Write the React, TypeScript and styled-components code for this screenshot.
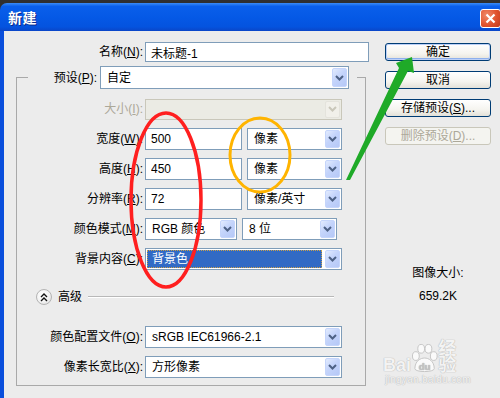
import React from 'react';
import styled, { createGlobalStyle } from 'styled-components';

const GlobalStyle = createGlobalStyle`
  html, body {
    margin: 0;
    padding: 0;
    background: #2f2f2f;
    overflow: hidden;
  }
  body {
    font-family: "Liberation Sans", "Noto Sans CJK SC", sans-serif;
    font-size: 12px;
  }
`;

const Page = styled.div`
  position: relative;
  width: 500px;
  height: 398px;
  overflow: hidden;
  padding-top: 3px;
  box-sizing: border-box;
`;

const Window = styled.div`
  width: 506px;
  display: flex;
  flex-direction: column;
`;

const TitleBar = styled.div`
  height: 28px;
  display: flex;
  align-items: center;
  justify-content: space-between;
  padding: 0 5px 0 8px;
  border-radius: 7px 7px 0 0;
  background: linear-gradient(#3b8cf5 0%, #0a5fea 12%, #0559e6 50%, #0453df 85%, #0a46c8 100%);
`;

const Title = styled.span`
  color: #fff;
  font-weight: bold;
  font-size: 14px;
  line-height: 14px;
  letter-spacing: 0.5px;
  text-shadow: 1px 1px 0 #0b2a8a;
  font-family: "Noto Sans CJK SC", sans-serif;
`;

const CloseButton = styled.div`
  width: 19px;
  height: 17px;
  margin-top: 2px;
  border: 1px solid #fff;
  border-radius: 3px;
  background: radial-gradient(circle at 30% 30%, #f08a6a 0%, #e0522e 55%, #c23a1a 100%);
  display: flex;
  align-items: center;
  justify-content: center;
`;

const Body = styled.div`
  height: 370px;
  display: flex;
  border-left: 4px solid #0a4fdc;
  background: #ececec;
  padding-top: 10px;
  box-sizing: border-box;
`;

const LeftColumn = styled.div`
  width: 366px;
  display: flex;
  flex-direction: column;
`;

const RightColumn = styled.div`
  width: 106px;
  margin-left: 15px;
  padding-top: 2px;
  display: flex;
  flex-direction: column;
  gap: 10px;
`;

const Row = styled.div<{ $labelWidth: number }>`
  display: flex;
  align-items: center;
  height: 22px;

  > label {
    width: ${(p) => p.$labelWidth}px;
    margin-right: 2px;
    flex-shrink: 0;
  }
`;

const Label = styled.label<{ $disabled?: boolean }>`
  text-align: right;
  color: ${(p) => (p.$disabled ? '#aca899' : '#000')};
  font-size: 12px;
  line-height: 14px;
  white-space: nowrap;
`;

const Key = styled.span`
  text-decoration: underline;
  text-underline-offset: 1px;
`;

const TextField = styled.input`
  box-sizing: border-box;
  width: ${(p) => p.width}px;
  height: 22px;
  border: 1px solid #7f9db9;
  background: #fff;
  padding: 0 5px;
  margin: 0;
  font-family: "Liberation Sans", "Noto Sans CJK SC", sans-serif;
  font-size: 12px;
  color: #000;
  outline: none;
`;

const SelectBox = styled.div<{ $width: number; $height?: number; $disabled?: boolean }>`
  box-sizing: border-box;
  width: ${(p) => p.$width}px;
  height: ${(p) => p.$height ?? 22}px;
  display: flex;
  align-items: stretch;
  border: 1px solid ${(p) => (p.$disabled ? '#c9c7ba' : '#7f9db9')};
  background: ${(p) => (p.$disabled ? '#ebebe4' : '#fff')};
  padding: 1px;
`;

const SelectText = styled.div<{ $selected?: boolean }>`
  flex: 1;
  display: flex;
  align-items: center;
  padding-left: ${(p) => (p.$selected ? 4 : 5)}px;
  margin-right: ${(p) => (p.$selected ? 3 : 0)}px;
  color: ${(p) => (p.$selected ? '#fff' : '#000')};
  background: ${(p) => (p.$selected ? '#316ac5' : 'transparent')};
  border: ${(p) => (p.$selected ? '1px dotted #caa04a' : 'none')};
  white-space: nowrap;
  overflow: hidden;
  line-height: 14px;
`;

const ArrowButton = styled.div<{ $disabled?: boolean }>`
  width: 15px;
  box-sizing: border-box;
  border: 1px solid ${(p) => (p.$disabled ? '#e4e3dc' : '#c5d5fb')};
  border-radius: 2px;
  background: ${(p) =>
    p.$disabled
      ? '#f1f0ea'
      : 'linear-gradient(135deg, #e2ebfe 0%, #c4d4fb 45%, #b5c8f7 100%)'};
  display: flex;
  align-items: center;
  justify-content: center;
`;

const Chevron = ({ color }: { color: string }) => (
  <svg width="9" height="6" viewBox="0 0 9 6">
    <path d="M1 1 L4.5 4.5 L8 1" fill="none" stroke={color} strokeWidth="2" />
  </svg>
);

interface SelectProps {
  width: number;
  height?: number;
  value?: string;
  disabled?: boolean;
  selected?: boolean;
}

const Select = ({ width, height, value, disabled, selected }: SelectProps) => (
  <SelectBox $width={width} $height={height} $disabled={disabled}>
    <SelectText $selected={selected}>{value}</SelectText>
    <ArrowButton $disabled={disabled}>
      <Chevron color={disabled ? '#c9c7ba' : '#4d6185'} />
    </ArrowButton>
  </SelectBox>
);

const GroupBox = styled.fieldset`
  width: 350px;
  box-sizing: border-box;
  margin: 3px 0 0 12px;
  padding: 0 0 7px 0;
  min-inline-size: 0;
  border: 1px solid #a9a9a9;
`;

const Legend = styled.legend`
  margin-left: 11px;
  padding: 0 8px 0 0;
`;

const LegendRow = styled.div`
  display: flex;
  align-items: center;
  height: 23px;

  > label {
    width: 69px;
    margin-right: 3px;
  }
`;

const Fields = styled.div<{ $top?: number }>`
  display: flex;
  flex-direction: column;
  gap: 8px;
  padding-top: ${(p) => p.$top ?? 0}px;
`;

const Pair = styled.div`
  display: flex;
  gap: 5px;
  align-items: center;
`;

const AdvancedRow = styled.div`
  display: flex;
  align-items: center;
  height: 16px;
  margin: 19px 31px 21px 19px;
  gap: 6px;
`;

const RoundButton = styled.div`
  width: 16px;
  height: 16px;
  box-sizing: border-box;
  border-radius: 50%;
  border: 1px solid #b4b4b4;
  background: radial-gradient(circle at 40% 35%, #ffffff 0%, #f2f2f2 55%, #d6d6d6 100%);
  display: flex;
  align-items: center;
  justify-content: center;
`;

const AdvancedText = styled.span`
  line-height: 14px;
`;

const Rule = styled.div`
  flex: 1;
  height: 1px;
  background: #b8b8b8;
  border-bottom: 1px solid #fff;
`;

const XPButton = styled.button<{ $default?: boolean }>`
  width: 106px;
  height: 18px;
  padding: 0;
  margin: 0;
  box-sizing: border-box;
  border: 1px solid ${(p) => (p.disabled ? '#c9c7ba' : '#003c74')};
  border-radius: 3px;
  background: ${(p) =>
    p.disabled ? '#f4f4f0' : 'linear-gradient(#ffffff 0%, #f5f4ef 60%, #e3e1d8 100%)'};
  box-shadow: ${(p) => (p.$default ? 'inset 0 0 0 1px #bcd0f7, inset 0 -1px 0 1px #8eb0ed' : 'none')};
  color: ${(p) => (p.disabled ? '#aca899' : '#000')};
  font-family: "Liberation Sans", "Noto Sans CJK SC", sans-serif;
  font-size: 12px;
  line-height: 14px;
`;

const Info = styled.div`
  margin-top: 111px;
  display: flex;
  flex-direction: column;
  align-items: center;
  gap: 9px;
  line-height: 14px;
`;

const Annotations = styled.svg`
  position: absolute;
  left: 0;
  top: 0;
  pointer-events: none;
`;

const Watermark = styled.div`
  position: absolute;
  left: 383px;
  top: 343px;
  width: 90px;
  display: flex;
  flex-direction: column;
  align-items: center;
  color: rgba(255, 255, 255, 0.85);
  text-shadow: 0 0 1px #b5b5b5, 0 0 1px #b5b5b5;
  pointer-events: none;
`;

const MarkLine = styled.div`
  display: flex;
  align-items: flex-end;
  height: 30px;
`;

const MarkWord = styled.span`
  font-family: "Liberation Sans", "Noto Sans CJK SC", sans-serif;
  font-weight: bold;
  font-size: 18px;
  line-height: 16px;
`;

const MarkUrl = styled.span`
  font-family: "Liberation Sans", sans-serif;
  font-size: 10px;
  line-height: 10px;
  margin-top: 2px;
  letter-spacing: 0.3px;
`;

const Paw = () => (
  <svg width="28" height="30" viewBox="0 0 28 30">
    <g fill="#fafafa" stroke="#c4c4c4" strokeWidth="1">
      <ellipse cx="5" cy="13" rx="3.5" ry="4.5" />
      <ellipse cx="10.5" cy="5.5" rx="3.5" ry="4.5" />
      <ellipse cx="18" cy="5.5" rx="3.5" ry="4.5" />
      <ellipse cx="23.5" cy="13" rx="3.5" ry="4.5" />
      <path d="M4 26 C4 18 10 15 14 15 C18 15 24 18 24 26 C24 30 4 30 4 26 Z" />
    </g>
    <text x="14" y="27" textAnchor="middle" fontSize="10" fontWeight="bold" fill="#c4c4c4" fontFamily="Liberation Sans, sans-serif">
      du
    </text>
  </svg>
);

export default function App() {
  return (
    <>
      <GlobalStyle />
      <Page>
        <Window>
          <TitleBar>
            <Title>新建</Title>
            <CloseButton>
              <svg width="11" height="11" viewBox="0 0 11 11">
                <path d="M1.5 1.5 L9.5 9.5 M9.5 1.5 L1.5 9.5" stroke="#fff" strokeWidth="2.2" />
              </svg>
            </CloseButton>
          </TitleBar>
          <Body>
            <LeftColumn>
              <Row $labelWidth={139}>
                <Label>名称(<Key>N</Key>):</Label>
                <TextField width={224} style={{ height: 20 }} defaultValue="未标题-1" readOnly />
              </Row>
              <GroupBox>
                <Legend>
                  <LegendRow>
                    <Label>预设(<Key>P</Key>):</Label>
                    <Select width={249} height={23} value="自定" />
                  </LegendRow>
                </Legend>
                <Fields $top={9}>
                  <Row $labelWidth={126}>
                    <Label $disabled>大小(<Key>I</Key>):</Label>
                    <Select width={197} height={21} disabled />
                  </Row>
                  <Row $labelWidth={126}>
                    <Label>宽度(<Key>W</Key>):</Label>
                    <Pair>
                      <TextField width={97} defaultValue="500" readOnly />
                      <Select width={95} value="像素" />
                    </Pair>
                  </Row>
                  <Row $labelWidth={126}>
                    <Label>高度(<Key>H</Key>):</Label>
                    <Pair>
                      <TextField width={97} defaultValue="450" readOnly />
                      <Select width={95} value="像素" />
                    </Pair>
                  </Row>
                  <Row $labelWidth={126}>
                    <Label>分辨率(<Key>R</Key>):</Label>
                    <Pair>
                      <TextField width={97} defaultValue="72" readOnly />
                      <Select width={95} value="像素/英寸" />
                    </Pair>
                  </Row>
                  <Row $labelWidth={126}>
                    <Label>颜色模式(<Key>M</Key>):</Label>
                    <Pair>
                      <Select width={92} value="RGB 颜色" />
                      <Select width={95} value="8 位" />
                    </Pair>
                  </Row>
                  <Row $labelWidth={126}>
                    <Label>背景内容(<Key>C</Key>):</Label>
                    <Select width={197} value="背景色" selected />
                  </Row>
                </Fields>
                <AdvancedRow>
                  <RoundButton>
                    <svg width="8" height="9" viewBox="0 0 8 9">
                      <path d="M1 4 L4 1 L7 4 M1 8 L4 5 L7 8" fill="none" stroke="#111" strokeWidth="1.4" />
                    </svg>
                  </RoundButton>
                  <AdvancedText>高级</AdvancedText>
                  <Rule />
                </AdvancedRow>
                <Fields>
                  <Row $labelWidth={126}>
                    <Label>颜色配置文件(<Key>O</Key>):</Label>
                    <Select width={197} value="sRGB IEC61966-2.1" />
                  </Row>
                  <Row $labelWidth={126}>
                    <Label>像素长宽比(<Key>X</Key>):</Label>
                    <Select width={197} value="方形像素" />
                  </Row>
                </Fields>
              </GroupBox>
            </LeftColumn>
            <RightColumn>
              <XPButton $default>确定</XPButton>
              <XPButton>取消</XPButton>
              <XPButton>存储预设(<Key>S</Key>)...</XPButton>
              <XPButton disabled>删除预设(<Key>D</Key>)...</XPButton>
              <Info>
                <span>图像大小:</span>
                <span>659.2K</span>
              </Info>
            </RightColumn>
          </Body>
        </Window>

        <Annotations width="500" height="398" viewBox="0 0 500 398">
          <ellipse cx="166" cy="200" rx="35" ry="87" fill="none" stroke="#ff1f1f" strokeWidth="3.5" />
          <ellipse cx="260" cy="155" rx="30" ry="37" fill="none" stroke="#ffb400" strokeWidth="3" />
          <polygon
            points="346,180 399,68 396,63 412,57 414,73 408,71 350,180"
            fill="#1faa28"
          />
        </Annotations>

        <Watermark>
          <MarkLine>
            <MarkWord>Bai</MarkWord>
            <Paw />
            <MarkWord>经验</MarkWord>
          </MarkLine>
          <MarkUrl>jingyan.baidu.com</MarkUrl>
        </Watermark>
      </Page>
    </>
  );
}
